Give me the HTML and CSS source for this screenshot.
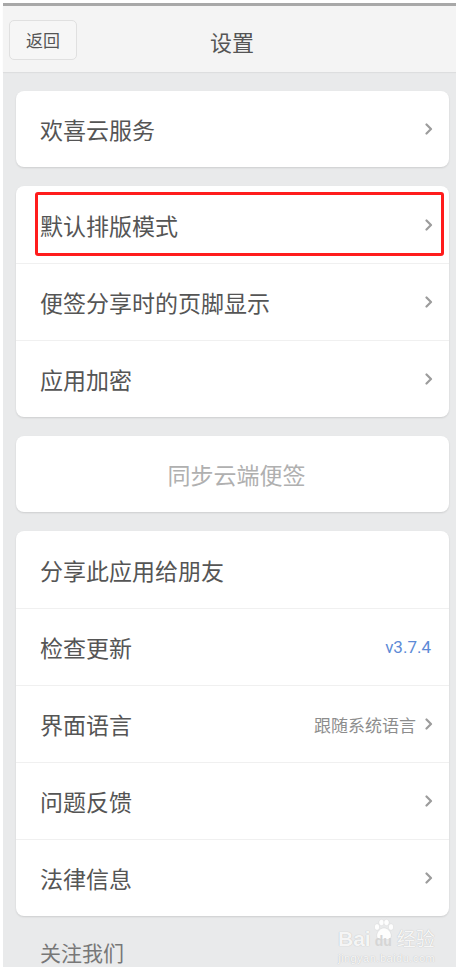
FILE: index.html
```html
<!DOCTYPE html>
<html lang="zh-CN">
<head>
  <meta charset="UTF-8" />
  <meta name="viewport" content="width=device-width, initial-scale=1.0" />
  <title>设置</title>
  <link rel="stylesheet" href="styles.css">
</head>
<body>
  <div class="screen">
    <header class="topbar">
      <button class="back-btn">返回</button>
      <h1 class="title">设置</h1>
    </header>

    <main class="content">
      <section class="card">
        <div class="row">
          <span class="label">欢喜云服务</span>
          <svg class="chevron" viewBox="0 0 8 12"><path d="M1.5 1.5 L6 6 L1.5 10.5"/></svg>
        </div>
      </section>

      <section class="card">
        <div class="row row-marked">
          <span class="label">默认排版模式</span>
          <svg class="chevron" viewBox="0 0 8 12"><path d="M1.5 1.5 L6 6 L1.5 10.5"/></svg>
          <span class="mark"></span>
        </div>
        <div class="row">
          <span class="label">便签分享时的页脚显示</span>
          <svg class="chevron" viewBox="0 0 8 12"><path d="M1.5 1.5 L6 6 L1.5 10.5"/></svg>
        </div>
        <div class="row">
          <span class="label">应用加密</span>
          <svg class="chevron" viewBox="0 0 8 12"><path d="M1.5 1.5 L6 6 L1.5 10.5"/></svg>
        </div>
      </section>

      <section class="card">
        <div class="row row-center">
          <span class="label muted">同步云端便签</span>
        </div>
      </section>

      <section class="card">
        <div class="row">
          <span class="label">分享此应用给朋友</span>
        </div>
        <div class="row">
          <span class="label">检查更新</span>
          <span class="version">v3.7.4</span>
        </div>
        <div class="row">
          <span class="label">界面语言</span>
          <span class="value">跟随系统语言</span>
          <svg class="chevron" viewBox="0 0 8 12"><path d="M1.5 1.5 L6 6 L1.5 10.5"/></svg>
        </div>
        <div class="row">
          <span class="label">问题反馈</span>
          <svg class="chevron" viewBox="0 0 8 12"><path d="M1.5 1.5 L6 6 L1.5 10.5"/></svg>
        </div>
        <div class="row">
          <span class="label">法律信息</span>
          <svg class="chevron" viewBox="0 0 8 12"><path d="M1.5 1.5 L6 6 L1.5 10.5"/></svg>
        </div>
      </section>

      <p class="section-title">关注我们</p>
    </main>

    <!-- watermark -->
    <div class="watermark">
      <div class="wm-logo">
        <span class="wm-bai">Bai</span>
        <span class="wm-paw">
          <svg viewBox="0 0 24 24">
            <ellipse cx="5" cy="9" rx="2.6" ry="3.2"/>
            <ellipse cx="9.5" cy="4.5" rx="2.6" ry="3.2"/>
            <ellipse cx="14.5" cy="4.5" rx="2.6" ry="3.2"/>
            <ellipse cx="19" cy="9" rx="2.6" ry="3.2"/>
            <path d="M12 10 C7 10 4 16 5 19 C6 22 9 22 12 21 C15 22 18 22 19 19 C20 16 17 10 12 10 Z"/>
          </svg>
          <span class="wm-du">du</span>
        </span>
        <span class="wm-jy">经验</span>
      </div>
      <div class="wm-url">jingyan.baidu.com</div>
    </div>
  </div>
</body>
</html>
```

FILE: styles.css
```css
:root {
  --page-bg: #e9eaeb;
  --bar-bg: #f4f4f4;
  --text: #555;
  --muted: #b0b0b0;
  --line: #f0f0f0;
  --chevron: #9c9c9c;
}

html, body {
  margin: 0;
  padding: 0;
  background: #fff;
  overflow: hidden;
}

body {
  font-family: "Noto Sans CJK SC", "Noto Sans", sans-serif;
  color: var(--text);
  padding-top: 3px;
}

.screen {
  position: relative;
  width: 458px;
  margin-left: 3px;
  min-height: 964px;
  background: var(--page-bg);
  border-top: 3px solid #a8a8a8;
}

.topbar {
  position: relative;
  height: 66px;
  background: var(--bar-bg);
  box-shadow: 0 1px 1px rgba(0, 0, 0, 0.05);
  box-sizing: border-box;
  display: flex;
  align-items: center;
  padding-left: 6px;
}

.back-btn {
  width: 68px;
  height: 40px;
  margin-top: 1px;
  border: 1px solid #e0e0e0;
  border-radius: 5px;
  background: #f6f6f6;
  color: #555;
  font-family: inherit;
  font-size: 17px;
  padding: 0;
}

.title {
  position: absolute;
  left: 0;
  right: 0;
  top: 0;
  margin: 0;
  line-height: 70px;
  text-align: center;
  font-size: 22px;
  font-weight: 400;
  color: #555;
  pointer-events: none;
}

.content {
  padding: 19px 12px 0 13px;
  display: flex;
  flex-direction: column;
  gap: 19px;
}

.card {
  background: #fff;
  border-radius: 8px;
  box-shadow: 0 1px 2px rgba(0, 0, 0, 0.12);
}

.row {
  position: relative;
  height: 77px;
  display: flex;
  align-items: center;
  padding: 0 16px 0 24px;
  border-top: 1px solid var(--line);
  box-sizing: border-box;
}

.card .row:first-child {
  border-top: none;
}

.card .row:only-child {
  height: 76px;
}

.label {
  flex: 1;
  font-size: 23px;
  color: var(--text);
  white-space: nowrap;
}

.row-center .label {
  text-align: center;
}

.muted {
  color: var(--muted);
}

.chevron {
  width: 8px;
  height: 12px;
  fill: none;
  stroke: var(--chevron);
  stroke-width: 2.2;
  stroke-linecap: round;
  stroke-linejoin: round;
}

.version {
  font-family: Roboto, "Noto Sans", sans-serif;
  font-size: 17px;
  color: #5d8ad6;
  margin-right: 2px;
}

.value {
  font-size: 17px;
  color: #8d8d8d;
  margin-right: 9px;
}

.mark {
  position: absolute;
  left: 19px;
  right: 5px;
  top: 6px;
  bottom: 7px;
  border: 3px solid #ff1c1c;
  border-radius: 3px;
}

.section-title {
  margin: 2px 0 0 0;
  padding-left: 24px;
  font-size: 21px;
  line-height: 30px;
  color: #777;
}

.watermark {
  position: absolute;
  left: 335px;
  top: 900px;
  width: 100px;
  color: rgba(255, 255, 255, 0.9);
  text-shadow: 0 0 1px rgba(0, 0, 0, 0.25);
}

.wm-logo {
  display: flex;
  align-items: flex-end;
  height: 44px;
}

.wm-bai {
  font-family: "Liberation Sans", sans-serif;
  font-weight: bold;
  font-size: 21px;
  line-height: 22px;
}

.wm-paw {
  position: relative;
  width: 24px;
  height: 42px;
  margin: 0 1px;
}

.wm-paw svg {
  position: absolute;
  left: 0;
  top: 2px;
  width: 24px;
  height: 40px;
  fill: rgba(255, 255, 255, 0.9);
  stroke: rgba(0, 0, 0, 0.12);
  stroke-width: 0.5;
}

.wm-du {
  position: absolute;
  left: 3px;
  bottom: 1px;
  font-family: "Liberation Sans", sans-serif;
  font-weight: bold;
  font-size: 14px;
  color: #d5d5d5;
  text-shadow: none;
}

.wm-jy {
  font-size: 19px;
  line-height: 24px;
}

.wm-url {
  font-family: "Liberation Sans", sans-serif;
  font-size: 11px;
  margin-top: 2px;
  letter-spacing: 0.5px;
}
```
